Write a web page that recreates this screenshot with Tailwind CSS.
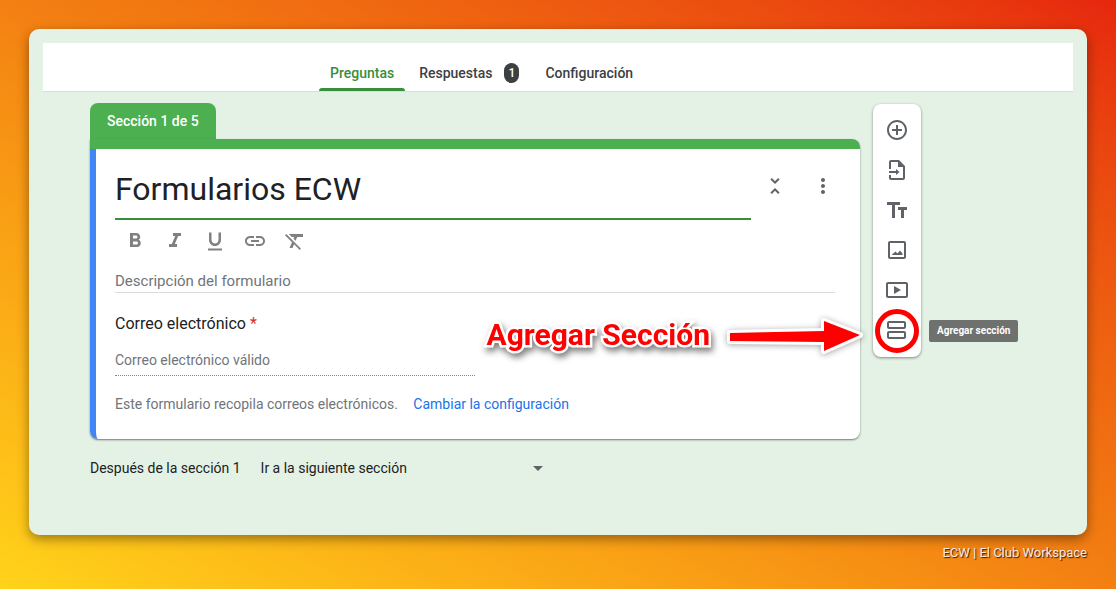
<!DOCTYPE html>
<html lang="es">
<head>
    <meta charset="UTF-8">
    <meta name="viewport" content="width=device-width, initial-scale=1.0">
    <title>Formularios ECW</title>
    <script src="https://cdn.jsdelivr.net/npm/@tailwindcss/browser@4"></script>
</head>
<body class="min-h-screen bg-linear-to-tr from-[#ffd31a] via-[#f38012] to-[#e6260e] px-[29px] pt-[29px] pb-6 font-['Roboto',sans-serif] text-[#202124]">

    <!-- Framed form editor -->
    <div class="rounded-[10px] bg-[#e4f2e5] px-3.5 pt-3.5 pb-[57px] shadow-[0_4px_12px_rgba(0,0,0,0.4)]">

        <!-- Tabs -->
        <header class="border-b border-[#dadce0] bg-white">
            <nav class="flex h-12 items-end pl-[276px] text-sm font-medium text-[#3c4043]">
                <a href="#preguntas" class="flex h-9 flex-col justify-between text-[#388e3c]">
                    <span class="px-[11px] pt-2 leading-5">Preguntas</span>
                    <span class="h-[3px] rounded-t-[3px] bg-[#388e3c]"></span>
                </a>
                <a href="#respuestas" class="flex h-9 items-start gap-3 px-3.5 pt-2 leading-5">
                    Respuestas
                    <span class="flex h-5 w-[15px] items-center justify-center rounded-full bg-[#3c4043] text-xs text-white">1</span>
                </a>
                <a href="#configuracion" class="flex h-9 px-3 pt-2 leading-5">Configuración</a>
            </nav>
        </header>

        <main class="flex items-start gap-[13px] pt-[11px] pr-[152px] pl-[47px]">
            <div class="min-w-0 flex-1">

                <!-- Section card -->
                <div class="inline-flex h-9 items-center rounded-t-lg bg-[#4caf50] px-[17px] align-top text-sm font-medium text-white">Sección 1 de 5</div>
                <section class="relative rounded-tr-lg rounded-b-lg bg-white shadow-[0_1px_2px_rgba(0,0,0,0.5)]">
                    <div class="h-2.5 rounded-tr-lg bg-[#4caf50]"></div>
                    <div class="rounded-b-lg border-l-[6px] border-[#4285f4] pt-[15px] pb-[25px] pl-[19px]">
                        <div class="flex items-start pr-[13px]">
                            <input type="text" value="Formularios ECW" aria-label="Título del formulario" class="h-14 min-w-0 flex-1 border-b-2 border-[#388e3c] pb-1 text-[32px] outline-none">
                            <button type="button" aria-label="Contraer sección" class="flex h-11 w-12 items-center justify-center text-[#5f6368]">
                                <svg class="size-6" viewBox="0 0 24 24" fill="currentColor"><path d="M7.41 18.59L8.83 20 12 16.83 15.17 20l1.41-1.41L12 14l-4.59 4.59zm9.18-13.18L15.17 4 12 7.17 8.83 4 7.41 5.41 12 10l4.59-4.59z"/></svg>
                            </button>
                            <button type="button" aria-label="Más opciones" class="flex h-11 w-12 items-center justify-center text-[#5f6368]">
                                <svg class="size-6" viewBox="0 0 24 24" fill="currentColor"><path d="M12 8c1.1 0 2-.9 2-2s-.9-2-2-2-2 .9-2 2 .9 2 2 2zm0 2c-1.1 0-2 .9-2 2s.9 2 2 2 2-.9 2-2-.9-2-2-2zm0 6c-1.1 0-2 .9-2 2s.9 2 2 2 2-.9 2-2-.9-2-2-2z"/></svg>
                            </button>
                        </div>

                        <!-- Text format buttons -->
                        <div class="flex h-[42px] items-center gap-4 pl-2 text-[#808080]">
                            <button type="button" aria-label="Negrita">
                                <svg class="size-6" viewBox="0 0 24 24" fill="currentColor"><path d="M15.6 10.79c.97-.67 1.65-1.77 1.65-2.79 0-2.26-1.75-4-4-4H7v14h7.04c2.09 0 3.71-1.7 3.71-3.79 0-1.52-.86-2.82-2.15-3.42zM10 6.5h3c.83 0 1.5.67 1.5 1.5s-.67 1.5-1.5 1.5h-3v-3zm3.5 9H10v-3h3.5c.83 0 1.5.67 1.5 1.5s-.67 1.5-1.5 1.5z"/></svg>
                            </button>
                            <button type="button" aria-label="Cursiva">
                                <svg class="size-6" viewBox="0 0 24 24" fill="currentColor"><path d="M10 4v3h2.21l-3.42 8H6v3h8v-3h-2.21l3.42-8H18V4z"/></svg>
                            </button>
                            <button type="button" aria-label="Subrayado">
                                <svg class="size-6" viewBox="0 0 24 24" fill="currentColor"><path d="M12 17c3.31 0 6-2.69 6-6V3.5h-2.5V11c0 1.93-1.57 3.5-3.5 3.5S8.5 12.93 8.5 11V3.5H6V11c0 3.31 2.69 6 6 6zm-7 2.5v2h14v-2H5z"/></svg>
                            </button>
                            <button type="button" aria-label="Insertar vínculo">
                                <svg class="size-6" viewBox="0 0 24 24" fill="currentColor"><path d="M3.9 12c0-1.71 1.39-3.1 3.1-3.1h4V7H7c-2.76 0-5 2.24-5 5s2.24 5 5 5h4v-1.9H7c-1.71 0-3.1-1.39-3.1-3.1zM8 13h8v-2H8v2zm9-6h-4v1.9h4c1.71 0 3.1 1.39 3.1 3.1s-1.39 3.1-3.1 3.1h-4V17h4c2.76 0 5-2.24 5-5s-2.24-5-5-5z"/></svg>
                            </button>
                            <button type="button" aria-label="Quitar formato">
                                <svg class="size-6" viewBox="0 0 24 24" fill="currentColor"><path d="M3.27 5L2 6.27l6.97 6.97L6.5 19h3l1.57-3.66L16.73 21 18 19.73 3.55 5.27 3.27 5zM6 5v.18L8.82 8h2.4l-.72 1.68 2.1 2.1L14.21 8H20V5H6z"/></svg>
                            </button>
                        </div>

                        <div class="pr-[25px]">
                            <input type="text" placeholder="Descripción del formulario" aria-label="Descripción del formulario" class="block h-[31px] w-full border-b border-[#dadce0] pt-2 text-[15px] placeholder:text-[#70757a] outline-none">
                        </div>

                        <label for="correo" class="mt-[19px] block text-base leading-6">Correo electrónico <span class="text-[#d93025]">*</span></label>
                        <input id="correo" type="email" placeholder="Correo electrónico válido" class="mt-3 block h-7 w-[360px] max-w-full border-b border-dotted border-[#80868b] pb-1 text-sm placeholder:text-[#70757a] outline-none">
                        <p class="mt-[18px] text-sm leading-5 text-[#70757a]">Este formulario recopila correos electrónicos. <a href="#configuracion" class="ml-3 text-[#1a73e8]">Cambiar la configuración</a></p>
                    </div>

                    <!-- Callout -->
                    <div class="absolute -right-1 bottom-[82px] flex items-center gap-3.5">
                        <span class="text-3xl leading-10 font-bold text-[#ff0000] [-webkit-text-stroke:5px_white] [paint-order:stroke] [filter:drop-shadow(2px_4px_3px_rgba(0,0,0,0.5))]">Agregar Sección</span>
                        <svg class="h-11 w-[140px] [filter:drop-shadow(0_1px_3px_rgba(0,0,0,0.35))]" viewBox="0 0 140 44">
                            <path d="M6 20L100 18V8L136 22L100 38V29L6 28Z" fill="#f00" stroke="#fff" stroke-width="6" stroke-linejoin="round" paint-order="stroke"/>
                        </svg>
                    </div>
                </section>

                <!-- After section -->
                <div class="mt-[19px] flex h-5 items-center gap-5 text-sm">
                    <label for="destino">Después de la sección 1</label>
                    <div class="relative">
                        <select id="destino" class="w-[289px] appearance-none outline-none">
                            <option>Ir a la siguiente sección</option>
                        </select>
                        <svg class="pointer-events-none absolute -top-0.5 right-0 size-6" viewBox="0 0 24 24" fill="#5f6368"><path d="M7 10l5 5 5-5z"/></svg>
                    </div>
                </div>
            </div>

            <!-- Side toolbar -->
            <aside class="relative mt-px flex w-12 flex-col items-center gap-4 rounded-lg bg-white pt-3.5 pb-[15px] text-[#5f6368] shadow-[0_1px_3px_rgba(0,0,0,0.45)]">
                <button type="button" aria-label="Agregar pregunta">
                    <svg class="size-6" viewBox="0 0 24 24" fill="currentColor"><path d="M13 7h-2v4H7v2h4v4h2v-4h4v-2h-4V7zm-1-5C6.48 2 2 6.48 2 12s4.48 10 10 10 10-4.48 10-10S17.52 2 12 2zm0 18c-4.41 0-8-3.59-8-8s3.59-8 8-8 8 3.59 8 8-3.59 8-8 8z"/></svg>
                </button>
                <button type="button" aria-label="Importar preguntas">
                    <svg class="size-6" viewBox="0 0 24 24" fill="currentColor"><path d="M14 2H6c-1.1 0-2 .9-2 2v7h2V4h7v5h5v11H6v-3H4v3c0 1.1.9 2 2 2h12c1.1 0 2-.9 2-2V8l-6-6zM11 11v2H4v2h7v2l3.5-3z"/></svg>
                </button>
                <button type="button" aria-label="Agregar título y descripción">
                    <svg class="size-6" viewBox="0 0 24 24" fill="currentColor"><path d="M2 4v3h5v13h3V7h5V4H2zm20 5h-9v3h3v8h3v-8h3V9z"/></svg>
                </button>
                <button type="button" aria-label="Agregar imagen">
                    <svg class="size-6" viewBox="0 0 24 24" fill="currentColor"><path d="M19 3H5c-1.1 0-2 .9-2 2v14c0 1.1.9 2 2 2h14c1.1 0 2-.9 2-2V5c0-1.1-.9-2-2-2zm0 16H5V5h14v14zM6.5 17h11v-1.5l-2.5-3-2.5 3-2-2-4 3.500z"/></svg>
                </button>
                <button type="button" aria-label="Agregar video">
                    <svg class="size-6" viewBox="0 0 24 24" fill="currentColor"><path d="M9 8v8l7-4-7-4zm12-4H3c-1.1 0-2 .9-2 2v12c0 1.1.9 2 2 2h18c1.1 0 2-.9 2-2V6c0-1.1-.9-2-2-2zm0 14H3V6h18v12z"/></svg>
                </button>
                <button type="button" aria-label="Agregar sección">
                    <svg class="size-6" viewBox="0 0 24 24" fill="none" stroke="currentColor" stroke-width="2"><rect x="3" y="4" width="17" height="6" rx="1"/><rect x="3" y="14" width="17" height="6" rx="1"/></svg>
                </button>
                <span class="pointer-events-none absolute bottom-1 left-0.5 size-11 rounded-full border-5 border-[#ff0000]"></span>
                <span role="tooltip" class="absolute bottom-[15px] left-14 rounded-xs bg-[#6f716f] px-2 text-[10px] leading-[22px] font-bold whitespace-nowrap text-white">Agregar sección</span>
            </aside>
        </main>
    </div>

    <footer class="mt-2 text-right text-[13px] leading-5 text-[#f5e9e0] text-shadow-[1px_1px_1px_rgba(0,0,0,0.8)]">ECW | El Club Workspace</footer>

</body>
</html>
